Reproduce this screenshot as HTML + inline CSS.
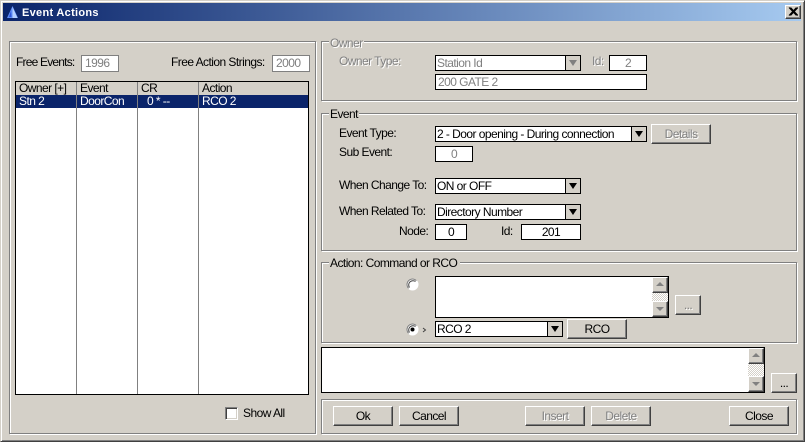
<!DOCTYPE html>
<html><head><meta charset="utf-8"><title>Event Actions</title>
<style>
html,body{margin:0;padding:0;width:805px;height:442px;overflow:hidden;background:#d4d0c8}
#w{position:absolute;left:0;top:0;width:805px;height:442px;background:#d4d0c8;font:12px "Liberation Sans",sans-serif;letter-spacing:-.55px;color:#000;overflow:hidden}
#w div,#w svg{position:absolute;box-sizing:border-box}
.t{white-space:nowrap;line-height:15px;height:15px}
.d{color:#808080}
.g{border:1px solid #808080;box-shadow:1px 1px 0 #fff,inset 1px 1px 0 #fff}
.l{background:#d4d0c8;padding:0 1px;white-space:nowrap;line-height:13px;height:13px}
.b{background:#fff;border:1px solid #000;white-space:nowrap;line-height:14px;padding:0 1px}
.c{text-align:center}
.s{border:1px solid #000;background:#fff}
.a{background:#d4d0c8;border-left:1px solid #000}
.a:after{content:"";position:absolute;left:3px;top:4px;border-left:4px solid transparent;border-right:4px solid transparent;border-top:6px solid #000}
.a.x:after{border-top-color:#808080}
.btn{background:#d4d0c8;border-style:solid;border-width:1px;border-color:#fff #404040 #404040 #fff;box-shadow:inset -1px -1px 0 #808080;text-align:center;line-height:18px;white-space:nowrap}
.dis{color:#808080;text-shadow:1px 1px 0 #fff}
.sb{background-color:#e8e6e1;background-image:repeating-conic-gradient(#d4d0c8 0 25%,#fff 0 50%);background-size:2px 2px}
.ar{background:#d4d0c8;border-style:solid;border-width:1px;border-color:#fff #404040 #404040 #fff;box-shadow:inset -1px -1px 0 #808080}
.ar:after{content:"";position:absolute;left:3px;border-left:4px solid transparent;border-right:4px solid transparent}
.up:after{top:4px;border-bottom:4px solid #808080}
.dn:after{top:5px;border-top:4px solid #808080}
.v{background:#808080;width:1px}
</style></head><body>
<div id="w">
<!-- window frame -->
<div style="left:0;top:0;width:805px;height:442px;border:1px solid;border-color:#d4d0c8 #404040 #404040 #d4d0c8;box-shadow:inset 1px 1px 0 #fff,inset -1px -1px 0 #808080"></div>
<!-- title -->
<div style="left:3px;top:3px;width:798px;height:18px;background:linear-gradient(90deg,#0a246a,#a6caf0)"></div>
<svg style="left:7px;top:6px" width="11" height="12" viewBox="0 0 11 12"><path d="M5.5 0L11 12H0Z" fill="#5f8cf5"/><path d="M5.5 1L5.5 12H10.5Z" fill="#b4d0ff"/><path d="M4 5L2 11H4.5Z" fill="#2f55d8"/></svg>
<div class="t" style="left:22px;top:6px;color:#fff;font:bold 11px/15px 'Liberation Sans',sans-serif;letter-spacing:.3px">Event Actions</div>
<div class="btn" style="left:785px;top:5px;width:16px;height:14px"></div>
<svg style="left:788px;top:7px" width="10" height="9" viewBox="0 0 10 9"><path d="M1 0.5L8.5 8.5M2.5 0.5L10 8.5M8.5 0.5L1 8.5M10 0.5L2.5 8.5" stroke="#000" stroke-width="1.1" fill="none"/></svg>

<!-- left panel -->
<div class="g" style="left:9px;top:41px;width:307px;height:393px"></div>
<div class="t" style="left:16px;top:55px;letter-spacing:-.8px">Free Events:</div>
<div class="b d" style="left:81px;top:55px;width:38px;height:17px;border-color:#808080;padding:0 3px">1996</div>
<div class="t" style="left:171px;top:55px">Free Action Strings:</div>
<div class="b d" style="left:272px;top:55px;width:38px;height:17px;border-color:#808080;padding:0 3px">2000</div>

<div class="s" style="left:15px;top:81px;width:294px;height:314px"></div>
<div style="left:16px;top:82px;width:292px;height:13px;background:#d4d0c8"></div>
<div style="left:16px;top:95px;width:292px;height:13px;background:#0a246a"></div>
<div class="v" style="left:76px;top:82px;height:312px"></div>
<div class="v" style="left:137px;top:82px;height:312px"></div>
<div class="v" style="left:198px;top:82px;height:312px"></div>
<div class="t" style="left:19px;top:81px">Owner [+]</div>
<div class="t" style="left:80px;top:81px">Event</div>
<div class="t" style="left:141px;top:81px">CR</div>
<div class="t" style="left:202px;top:81px">Action</div>
<div class="t" style="left:19px;top:94px;color:#fff">Stn 2</div>
<div class="t" style="left:80px;top:94px;color:#fff">DoorCon</div>
<div class="t" style="left:147px;top:94px;color:#fff">0 * --</div>
<div class="t" style="left:202px;top:94px;color:#fff">RCO 2</div>

<div style="left:225px;top:407px;width:13px;height:13px;background:#fff;border:1px solid;border-color:#808080 #fff #fff #808080;box-shadow:inset 1px 1px 0 #404040,inset -1px -1px 0 #d4d0c8"></div>
<div class="t" style="left:243px;top:406px">Show All</div>

<!-- owner -->
<div class="g" style="left:321px;top:41px;width:476px;height:60px"></div>
<div class="l dis" style="left:329px;top:37px">Owner</div>
<div class="t dis" style="left:339px;top:54px">Owner Type:</div>
<div class="b d" style="left:435px;top:55px;width:146px;height:16px">Station Id</div>
<div class="a x" style="left:565px;top:56px;width:15px;height:14px;background:#d4d0c8"></div>
<div class="t dis" style="left:592px;top:54px">Id:</div>
<div class="b d c" style="left:609px;top:55px;width:38px;height:16px">2</div>
<div class="b d" style="left:435px;top:74px;width:212px;height:16px;padding-left:2px">200 GATE 2</div>

<!-- event -->
<div class="g" style="left:321px;top:113px;width:476px;height:138px"></div>
<div class="l" style="left:329px;top:108px">Event</div>
<div class="t" style="left:339px;top:126px">Event Type:</div>
<div class="b" style="left:435px;top:126px;width:212px;height:16px">2 - Door opening - During connection</div>
<div class="a" style="left:631px;top:127px;width:15px;height:14px"></div>
<div class="btn dis" style="left:651px;top:124px;width:60px;height:20px">Details</div>
<div class="t" style="left:339px;top:145px">Sub Event:</div>
<div class="b d c" style="left:435px;top:146px;width:38px;height:16px">0</div>
<div class="t" style="left:339px;top:178px">When Change To:</div>
<div class="b" style="left:435px;top:178px;width:146px;height:16px">ON or OFF</div>
<div class="a" style="left:565px;top:179px;width:15px;height:14px"></div>
<div class="t" style="left:339px;top:204px">When Related To:</div>
<div class="b" style="left:435px;top:204px;width:146px;height:16px">Directory Number</div>
<div class="a" style="left:565px;top:205px;width:15px;height:14px"></div>
<div class="t" style="left:399px;top:224px">Node:</div>
<div class="b c" style="left:435px;top:224px;width:32px;height:16px">0</div>
<div class="t" style="left:501px;top:224px">Id:</div>
<div class="b c" style="left:521px;top:224px;width:60px;height:16px">201</div>

<!-- action -->
<div class="g" style="left:321px;top:262px;width:476px;height:81px"></div>
<div class="l" style="left:329px;top:257px;padding-right:3px">Action: Command or RCO</div>
<svg style="left:406px;top:278px" width="13" height="13" viewBox="0 0 13 13"><circle cx="6.5" cy="6.5" r="5.5" fill="#fff" stroke="#fff"/><path d="M2.6 10.4A5.5 5.5 0 0 1 10.4 2.6" stroke="#808080" fill="none"/><path d="M3.5 9.5A4.3 4.3 0 0 1 9.5 3.5" stroke="#404040" fill="none"/></svg>
<svg style="left:406px;top:323px" width="13" height="13" viewBox="0 0 13 13"><circle cx="6.5" cy="6.5" r="5.5" fill="#fff" stroke="#fff"/><path d="M2.6 10.4A5.5 5.5 0 0 1 10.4 2.6" stroke="#808080" fill="none"/><path d="M3.5 9.5A4.3 4.3 0 0 1 9.5 3.5" stroke="#404040" fill="none"/><circle cx="6.5" cy="6.5" r="2" fill="#000"/></svg>
<svg style="left:422px;top:327px" width="5" height="6" viewBox="0 0 5 6"><path d="M1 1L3.5 3L1 5" stroke="#404040" fill="none"/></svg>
<div class="s" style="left:435px;top:276px;width:234px;height:42px"></div>
<div class="sb" style="left:652px;top:277px;width:16px;height:40px"></div>
<div class="ar up" style="left:652px;top:277px;width:16px;height:16px"></div>
<div class="ar dn" style="left:652px;top:301px;width:16px;height:16px"></div>
<div class="btn dis" style="left:675px;top:295px;width:26px;height:20px">...</div>
<div class="b" style="left:435px;top:321px;width:128px;height:16px">RCO 2</div>
<div class="a" style="left:547px;top:322px;width:15px;height:14px"></div>
<div class="btn" style="left:567px;top:319px;width:60px;height:20px">RCO</div>

<!-- memo -->
<div class="s" style="left:321px;top:347px;width:444px;height:46px"></div>
<div class="sb" style="left:748px;top:348px;width:16px;height:44px"></div>
<div class="ar up" style="left:748px;top:348px;width:16px;height:16px"></div>
<div class="ar dn" style="left:748px;top:376px;width:16px;height:16px"></div>
<div class="btn" style="left:771px;top:373px;width:26px;height:20px">...</div>

<!-- buttons -->
<div class="g" style="left:321px;top:399px;width:476px;height:35px"></div>
<div class="btn" style="left:333px;top:406px;width:60px;height:20px">Ok</div>
<div class="btn" style="left:399px;top:406px;width:60px;height:20px">Cancel</div>
<div class="btn dis" style="left:525px;top:406px;width:60px;height:20px">Insert</div>
<div class="btn dis" style="left:591px;top:406px;width:60px;height:20px">Delete</div>
<div class="btn" style="left:729px;top:406px;width:60px;height:20px">Close</div>
</div>
</body></html>
